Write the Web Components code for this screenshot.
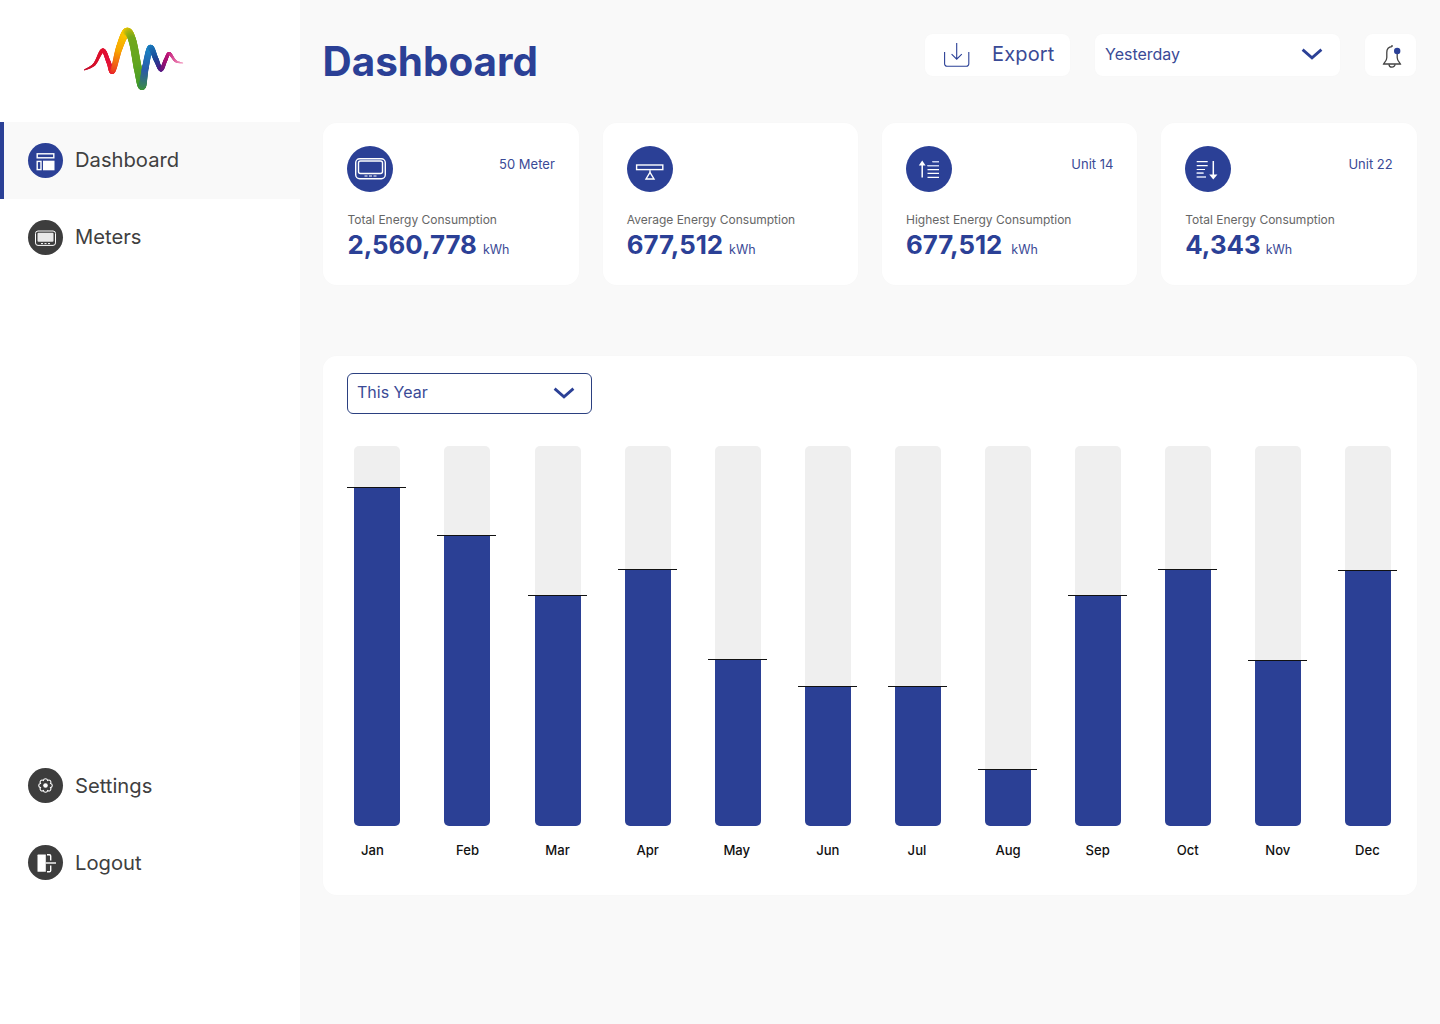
<!doctype html>
<html lang="en"><head><meta charset="utf-8"><title>Dashboard</title>
<style>
html,body{margin:0;padding:0;height:100%}
body{font-family:Inter,"Liberation Sans",sans-serif;background:#f9f9f9}
</style></head>
<body>
<energy-app></energy-app>
<script>
const BLUE='#2b4096';
const ICONS={
 dash:`<rect x="9.2" y="10.8" width="16.6" height="4" fill="none" stroke="#fff" stroke-width="1.4"/><rect x="9.2" y="18.4" width="3.8" height="8.2" fill="none" stroke="#fff" stroke-width="1.4"/><rect x="15" y="17.7" width="11.5" height="9.6" fill="#fff"/>`,
 meter:`<rect x="7.5" y="11" width="20" height="14.4" rx="2.5" fill="none" stroke="#fff" stroke-width="1"/><rect x="9.5" y="12.7" width="16" height="9" rx="1" fill="#e8e8e8"/><path d="M13 23.6h2M16.5 23.6h2M20 23.6h2" stroke="#fff" stroke-width="1"/>`,
 gear:`<path d="M22.58 15.4A2.15 2.15 0 0 1 22.58 19.6A2.15 2.15 0 0 1 19.6 22.58A2.15 2.15 0 0 1 15.4 22.58A2.15 2.15 0 0 1 12.42 19.6A2.15 2.15 0 0 1 12.42 15.4A2.15 2.15 0 0 1 15.4 12.42A2.15 2.15 0 0 1 19.6 12.42A2.15 2.15 0 0 1 22.58 15.4Z" fill="none" stroke="#fff" stroke-width="1.1"/><circle cx="17.5" cy="17.5" r="2.3" fill="#fff"/>`,
 logout:`<path d="M9.5 10.2a.6.6 0 0 1 .6-.6H17.8V26.8H10.1a.6.6 0 0 1-.6-.6Z" fill="#fff"/><path d="M19 9.8h2.4q1.3 0 1.3 1.3V15.4M22.7 20.6v4.9q0 1.3-1.3 1.3H19" fill="none" stroke="#fff" stroke-width="1.4"/><path d="M17.8 18H28" stroke="#fff" stroke-width="1.4"/>`,
 cardMeter:`<rect x="8.7" y="12.7" width="29.6" height="20" rx="4" fill="none" stroke="#fff" stroke-width="1.4"/><rect x="11.5" y="15" width="24" height="12.5" rx="2" fill="none" stroke="#fff" stroke-width="1.4"/><path d="M17.5 30h3M22 30h3M26.5 30h3" stroke="#fff" stroke-width="1.2"/>`,
 cardAvg:`<rect x="9.6" y="19" width="26.2" height="4.6" fill="none" stroke="#fff" stroke-width="1.4"/><path d="M23 26.3L27 33H19Z" fill="none" stroke="#fff" stroke-width="1.4"/><path d="M23 23.6v2.7" stroke="#fff" stroke-width="1.2"/>`,
 cardHigh:`<path d="M16.2 31.5V19" stroke="#fff" stroke-width="1.5"/><path d="M16.2 14.6L19.6 19.4H12.8Z" fill="#fff"/><path d="M26.5 15.7H33M21.5 19.7H33M21.5 23.7H33M21.5 27.3H33M21.5 31.3H33" stroke="#fff" stroke-width="1.2"/><path d="M26.5 15.7H33M21.5 19.7H33" stroke="#c8d0f0" stroke-width="1.2"/>`,
 cardLow:`<path d="M11.7 15.7H22.7M11.7 19.7H22.7M11.7 23.5H20M11.7 27.2H18.5M11.7 31H21" stroke="#fff" stroke-width="1.2"/><path d="M11.7 27.2H18.5M11.7 31H21" stroke="#c8d0f0" stroke-width="1.2"/><path d="M28.3 15V29" stroke="#fff" stroke-width="1.5"/><path d="M24.2 28.5H32.4L28.3 33.6Z" fill="#fff"/>`
};
const chevron=c=>`<svg width="22" height="12" viewBox="0 0 22 12" aria-hidden="true"><path d="M1.6 1.6L11 9.8L20.4 1.6" fill="none" stroke="${c}" stroke-width="2.8"/></svg>`;

class BaseEl extends HTMLElement{
 constructor(){super();this.attachShadow({mode:'open'})}
 connectedCallback(){this.shadowRoot.innerHTML=this.render()}
}
class BrandLogo extends HTMLElement{
 constructor(){super();this.attachShadow({mode:'open'})}
 connectedCallback(){
  const k=[[83.3,69,.8,'#c01030'],[93.3,63.3,2.6,'#d4102c'],[101.7,49.5,4,'#e0102c'],[107.5,61,4.2,'#e2103a'],[111.7,70,5,'#e8202c'],
  [118.3,46.7,6.6,'#f7a400'],[125.7,31,8,'#f9c800'],[131.5,40,7.6,'#74a81c'],[136.7,66.7,8,'#62a620'],[141,85,7.6,'#3f9a2c'],
  [144.5,66,6.6,'#2a5aa8'],[149.3,47,6,'#1a84c4'],[155,58.3,5,'#1a4c9a'],[160,68.4,4,'#4c1a84'],[164.6,59,3.6,'#a01070'],[168.3,52.5,3,'#c01878'],[174.5,60,2.2,'#e060a0'],[181.7,62,.8,'#f4a8c8']];
  const hex=c=>[1,3,5].map(i=>parseInt(c.substr(i,2),16));
  let s='';const cr=(a,b,c,d,t)=>.5*(2*b+(c-a)*t+(2*a-5*b+4*c-d)*t*t+(3*b-a-3*c+d)*t*t*t);
  let prev=null;
  for(let i=0;i<k.length-1;i++){
   const p0=k[Math.max(0,i-1)],p1=k[i],p2=k[i+1],p3=k[Math.min(k.length-1,i+2)];
   const c1=hex(p1[3]),c2=hex(p2[3]);
   for(let j=0;j<=14;j++){const t=j/14;
    const x=cr(p0[0],p1[0],p2[0],p3[0],t),y=cr(p0[1],p1[1],p2[1],p3[1],t);
    const w=p1[2]+(p2[2]-p1[2])*t;
    const col=c1.map((v,n)=>Math.round(v+(c2[n]-v)*t));
    if(prev)s+=`<line x1="${prev[0].toFixed(2)}" y1="${prev[1].toFixed(2)}" x2="${x.toFixed(2)}" y2="${y.toFixed(2)}" stroke="rgb(${col})" stroke-width="${w.toFixed(2)}"/>`;
    prev=[x,y];
   }
  }
  this.shadowRoot.innerHTML=`<style>:host{display:block;width:100px;height:66px}svg{display:block;filter:blur(.4px)}</style><svg width="100" height="66" viewBox="83 25 100 66" stroke-linecap="round" aria-label="logo">${s}</svg>`;
 }
}
class IconDisc extends BaseEl{
 render(){const size=+this.getAttribute('size')||35;const vb=size;
  return `<style>:host{display:block;width:${size}px;height:${size}px;border-radius:50%;background:${this.getAttribute('color')||'#3d3d3d'};flex:none}svg{display:block}</style><svg width="${size}" height="${size}" viewBox="0 0 ${vb} ${vb}" aria-hidden="true">${ICONS[this.getAttribute('icon')]}</svg>`}
}
class NavItem extends BaseEl{
 render(){const a=this.hasAttribute('active');const low=this.hasAttribute('low');
  return `<style>:host{display:flex;align-items:center;gap:12px;height:77px;padding-left:${a?24:28}px;box-sizing:border-box;background:${a?'#f9f9f9':'transparent'};border-left:${a?'4px solid '+BLUE:'0'};color:#404040;font-size:20.2px;line-height:26px}
  span{margin-top:${low?0:-2}px}</style>
  <icon-disc icon="${this.getAttribute('icon')}" color="${a?BLUE:'#3d3d3d'}"></icon-disc><span><slot></slot></span>`}
}
class SideBar extends BaseEl{
 render(){return `<style>:host{display:flex;flex-direction:column;width:300px;flex:none;background:#fff;height:1024px;box-sizing:border-box;padding-bottom:123px}
 .logo{height:122px;display:flex;justify-content:center;padding:26px 0 0 0;box-sizing:border-box}.top{flex:1}</style>
 <div class="logo"><brand-logo style="margin-left:-33px"></brand-logo></div>
 <div class="top"><nav-item icon="dash" active>Dashboard</nav-item><nav-item icon="meter">Meters</nav-item></div>
 <nav-item icon="gear" low>Settings</nav-item><nav-item icon="logout" low>Logout</nav-item>`}
}
class TopBar extends BaseEl{
 render(){return `<style>:host{display:flex;height:89px;box-sizing:border-box;align-items:flex-start;color:${BLUE};padding-right:1px}
 h1{margin:6px auto 0 -.4px;font-size:40.4px;line-height:44px;font-weight:700;letter-spacing:0}
 .box{background:#fff;height:42px;border-radius:8px;display:flex;align-items:center;box-sizing:border-box;box-shadow:0 0 3px rgba(0,0,0,.015)}
 .exp{width:145px;padding-left:19px;margin-right:25px;font-size:20px;color:#3a4a96;gap:22px;letter-spacing:.15px}
 .exp span{margin-top:-2px}
 .sel{width:245px;padding:0 17px 0 10px;justify-content:space-between;font-size:16px;color:#3a4a96;margin-right:25px}
 .sel span{margin-top:-3px}
 .sel svg{margin-top:-2px}.bell{width:51px;justify-content:center}
 .bell svg{margin-left:2px;margin-top:3px}
 svg{display:block}</style>
 <h1>Dashboard</h1>
 <div class="box exp"><svg width="26" height="26" viewBox="0 0 26 26" aria-hidden="true" fill="none" stroke="${BLUE}" stroke-width="1.1"><path d="M.6 10V21.8a2.4 2.4 0 0 0 2.4 2.4H22.4a2.4 2.4 0 0 0 2.4-2.4V10"/><path d="M12.7 1V17M7.6 12.2l5.1 5 5.1-5"/></svg><span>Export</span></div>
 <div class="box sel"><span>Yesterday</span>${chevron(BLUE)}</div>
 <div class="box bell"><svg width="22" height="25" viewBox="0 0 22 25" aria-hidden="true" fill="none" stroke="#444" stroke-width="1.3"><path d="M11 1V3M11 2.6C7.4 2.8 5.8 5.6 5.8 8.5V13.4C5.8 16.8 3.4 18 2.6 20H19.4C18.6 18 16.2 16.8 16.2 13.4V10"/><path d="M8 20.2a3 3 0 0 0 6 0"/><circle cx="16.2" cy="7" r="3.2" fill="${BLUE}" stroke="none"/></svg></div>`}
}
class StatCard extends BaseEl{
 render(){const g=this.getAttribute('unit-gap')||6;return `<style>:host{display:block;background:#fff;border-radius:14px;height:162px;box-sizing:border-box;padding:23px 24px 0 24px;box-shadow:0 0 4px rgba(0,0,0,.012)}
 .top{display:flex;justify-content:space-between;height:46px;color:#3a4a96;font-size:13px;line-height:16px}
 .top span{margin-top:10px}
 .lab{margin-top:20px;font-size:12px;line-height:16px;color:#666}
 .val{display:flex;align-items:baseline;color:${BLUE};font-weight:700;font-size:25.8px;line-height:34px;margin-top:0}
 .u{font-weight:400;font-size:12.5px;color:#3a4a96;margin-left:${g}px}</style>
 <div class="top"><icon-disc size="46" color="${BLUE}" icon="${this.getAttribute('icon')}"></icon-disc><span>${this.getAttribute('tag')||''}</span></div>
 <div class="lab">${this.getAttribute('label')}</div>
 <div class="val">${this.getAttribute('value')}<span class="u">kWh</span></div>`}
}
class MonthBar extends BaseEl{
 render(){const h=+this.getAttribute('h');return `<style>:host{display:flex;flex-direction:column;width:46px;align-items:center}
 .track{width:46px;height:380px;background:#efefef;border-radius:5px;display:flex;flex-direction:column;justify-content:flex-end}
 .fill{background:#2b4095;height:${h}px;border-radius:0 0 5px 5px;position:relative}
 .fill::before{content:"";position:absolute;left:-7px;right:-6px;top:0;height:1px;background:#111}
 .lab{margin-top:16px;font-size:13.1px;line-height:16px;font-weight:450;color:#111;white-space:nowrap;margin-right:${this.getAttribute('nudge')||0}px}</style>
 <div class="track"><div class="fill"></div></div><div class="lab">${this.getAttribute('m')}</div>`}
}
class UsageChart extends BaseEl{
 render(){const d=[['Jan',339,10],['Feb',291,0],['Mar',231,0],['Apr',257,0],['May',167,2],['Jun',140,0],['Jul',140,2],['Aug',57,0],['Sep',231,1],['Oct',257,1],['Nov',166,1],['Dec',256,2]];
 return `<style>:host{display:block;background:#fff;border-radius:14px;height:539px;box-sizing:border-box;padding:17px 25.55px 0 24px;box-shadow:0 0 4px rgba(0,0,0,.012);margin-top:71px}
 .sel{width:245px;height:41px;box-sizing:border-box;border:1px solid #2b4080;border-radius:6px;display:flex;align-items:center;justify-content:space-between;padding:0 16px 0 9px;font-size:16px;color:#3a4a96}
 .sel span{margin-top:-3px}
 .sel svg{display:block;margin-top:-1px}
 .bars{display:flex;justify-content:space-between;margin:32px 0 0 7.4px}</style>
 <div class="sel"><span>This Year</span>${chevron(BLUE)}</div>
 <div class="bars">${d.map(x=>`<month-bar m="${x[0]}" h="${x[1]}" nudge="${x[2]}"></month-bar>`).join('')}</div>`}
}
class EnergyApp extends BaseEl{
 render(){return `<style>:host{display:flex;width:1440px;height:1024px;overflow:hidden;background:#f9f9f9}
 main{flex:1;padding:34px 23px 0 23px;box-sizing:border-box;min-width:0}
 .cards{display:grid;grid-template-columns:repeat(4,1fr);column-gap:23.9px;margin:0 .3px 0 .4px}</style>
 <side-bar></side-bar>
 <main><top-bar></top-bar>
 <div class="cards">
 <stat-card icon="cardMeter" tag="50 Meter" label="Total Energy Consumption" value="2,560,778"></stat-card>
 <stat-card icon="cardAvg" label="Average Energy Consumption" value="677,512"></stat-card>
 <stat-card icon="cardHigh" tag="Unit 14" label="Highest Energy Consumption" value="677,512" unit-gap="9"></stat-card>
 <stat-card icon="cardLow" tag="Unit 22" label="Total Energy Consumption" value="4,343" unit-gap="5"></stat-card>
 </div>
 <usage-chart></usage-chart></main>`}
}
[['brand-logo',BrandLogo],['icon-disc',IconDisc],['nav-item',NavItem],['side-bar',SideBar],['top-bar',TopBar],['stat-card',StatCard],['month-bar',MonthBar],['usage-chart',UsageChart],['energy-app',EnergyApp]].forEach(([n,c])=>customElements.define(n,c));
</script>
</body></html>
